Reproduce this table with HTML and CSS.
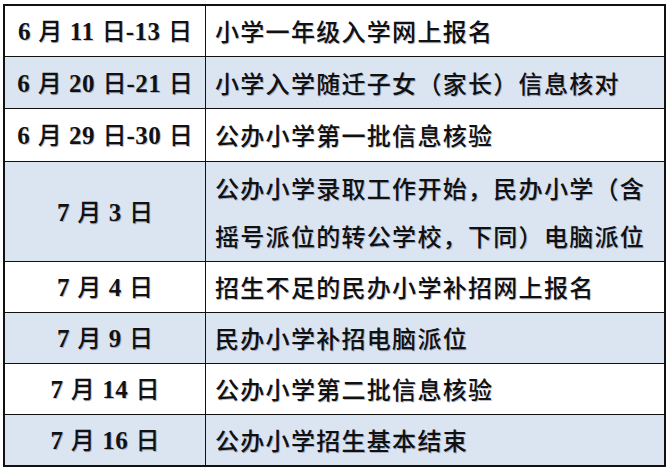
FILE: index.html
```html
<!DOCTYPE html>
<html lang="zh-CN">
<head>
<meta charset="utf-8">
<title>招生日程</title>
<link rel="stylesheet" href="styles.css">
</head>
<body>
<table class="sched">
  <tr class="r1"><td class="date"><span class="n">6</span> 月 <span class="n">11</span> 日<span class="n">-13</span> 日</td><td class="desc">小学一年级入学网上报名</td></tr>
  <tr class="r2 blue"><td class="date"><span class="n">6</span> 月 <span class="n">20</span> 日<span class="n">-21</span> 日</td><td class="desc">小学入学随迁子女（家长）信息核对</td></tr>
  <tr class="r3"><td class="date"><span class="n">6</span> 月 <span class="n">29</span> 日<span class="n">-30</span> 日</td><td class="desc">公办小学第一批信息核验</td></tr>
  <tr class="r4 blue"><td class="date"><span class="n">7</span> 月 <span class="n">3</span> 日</td><td class="desc two">公办小学录取工作开始，民办小学（含<br>摇号派位的转公学校，下同）电脑派位</td></tr>
  <tr class="r5"><td class="date"><span class="n">7</span> 月 <span class="n">4</span> 日</td><td class="desc">招生不足的民办小学补招网上报名</td></tr>
  <tr class="r6 blue"><td class="date"><span class="n">7</span> 月 <span class="n">9</span> 日</td><td class="desc">民办小学补招电脑派位</td></tr>
  <tr class="r7"><td class="date"><span class="n">7</span> 月 <span class="n">14</span> 日</td><td class="desc">公办小学第二批信息核验</td></tr>
  <tr class="r8 blue"><td class="date"><span class="n">7</span> 月 <span class="n">16</span> 日</td><td class="desc">公办小学招生基本结束</td></tr>
</table>
</body>
</html>
```
FILE: styles.css
```css
html, body {
  margin: 0;
  padding: 0;
  background: #ffffff;
}
body {
  padding: 4px 0 0 3px;
}
.sched {
  border-collapse: collapse;
  width: 663px;
  table-layout: fixed;
  border: 2px solid #111;
  font-family: "Noto Sans CJK SC", "Noto Sans CJK JP", sans-serif;
  font-weight: 500;
  font-size: 24px;
  color: #111;
}
.sched td {
  border: 1px solid #111;
  padding: 0;
  line-height: 48px;
  white-space: nowrap;
  text-shadow: 1px 1px 0 rgba(0, 0, 40, 0.25);
}
.sched .date {
  width: 200px;
  text-align: center;
  word-spacing: 2px;
}
.sched .desc {
  padding-left: 9px;
  letter-spacing: 1.3px;
}
.n {
  font-family: "Liberation Serif", serif;
  font-weight: bold;
  font-size: 25px;
  letter-spacing: 0.5px;
}
.blue td {
  background: #dbe5f1;
}
.r1 { height: 50px; }
.r2 { height: 52px; }
.r3 { height: 53px; }
.r4 { height: 100px; }
.r5 { height: 51px; }
.r6 { height: 50px; }
.r7 { height: 51px; }
.r8 { height: 50px; }
```
